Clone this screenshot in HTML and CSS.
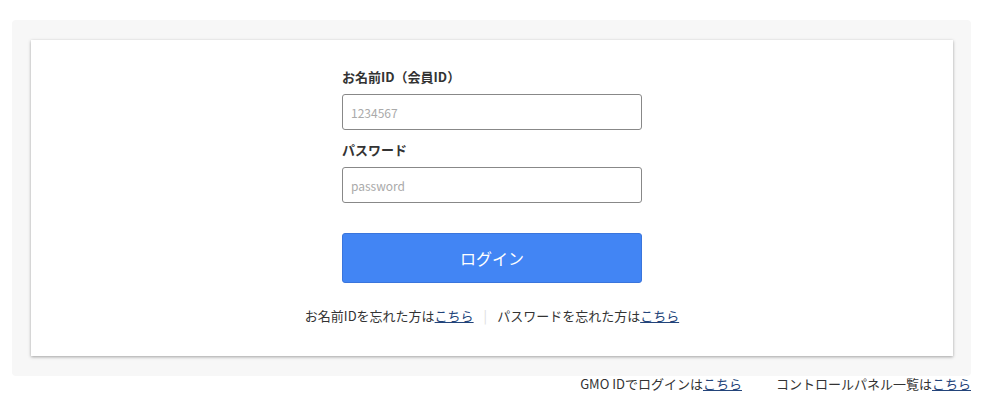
FILE: index.html
```html
<!DOCTYPE html>
<html lang="ja">
<head>
  <meta charset="UTF-8" />
  <meta name="viewport" content="width=device-width, initial-scale=1.0" />
  <title>ログイン</title>
  <link rel="stylesheet" href="styles.css">
</head>
<body>

<div class="page">
  <div class="panel">
    <div class="card">
      <form class="login">
        <label class="lbl" for="uid">お名前ID（会員ID）</label>
        <input class="field" id="uid" type="text" placeholder="1234567">
        <label class="lbl" for="pw">パスワード</label>
        <input class="field" id="pw" type="password" placeholder="password">
        <button class="btn" type="button">ログイン</button>
      </form>
      <p class="forgot">
        お名前IDを忘れた方は<a href="#">こちら</a><span class="sep">|</span>パスワードを忘れた方は<a href="#">こちら</a>
      </p>
    </div>
  </div>
  <div class="links">
    <span>GMO IDでログインは<a href="#">こちら</a></span>
    <span>コントロールパネル一覧は<a href="#">こちら</a></span>
  </div>
</div>

</body>
</html>
```

FILE: styles.css
```css
body { margin: 0; font-family: "Noto Sans CJK JP", "Noto Sans", sans-serif; font-size: 13px; color: #333; background: #fff; }
a { color: #23447a; text-decoration: underline; }
.page { margin: 20px 18px 0 12px; }
.panel { background: #f7f7f7; border-radius: 4px; padding: 20px 18px 20px 19px; }
.card { background: #fff; box-shadow: 0 1px 3px rgba(0,0,0,0.35); padding: 27px 0 30px; }
.login { width: 300px; margin: 0 auto; display: flex; flex-direction: column; }
.lbl { font-weight: bold; line-height: 20px; margin-bottom: 7px; }
.field { box-sizing: border-box; height: 36px; border: 1px solid #888; border-radius: 3px;
         padding: 0 8px; font-family: inherit; font-size: 12px; color: #333; margin-bottom: 10px; }
.field::placeholder { color: #aaa; }
.btn { box-sizing: border-box; height: 50px; margin-top: 20px; background: #4285f4; border: 1px solid #3a75dc;
       border-radius: 3px; color: #fff; font-family: inherit; font-size: 16px; }
.forgot { margin: 23px 0 0; text-align: center; line-height: 20px; }
.sep { color: #ddd; margin: 0 10px; }
.links { display: flex; justify-content: flex-end; gap: 34px; line-height: 16px; margin-top: 0; }
```
